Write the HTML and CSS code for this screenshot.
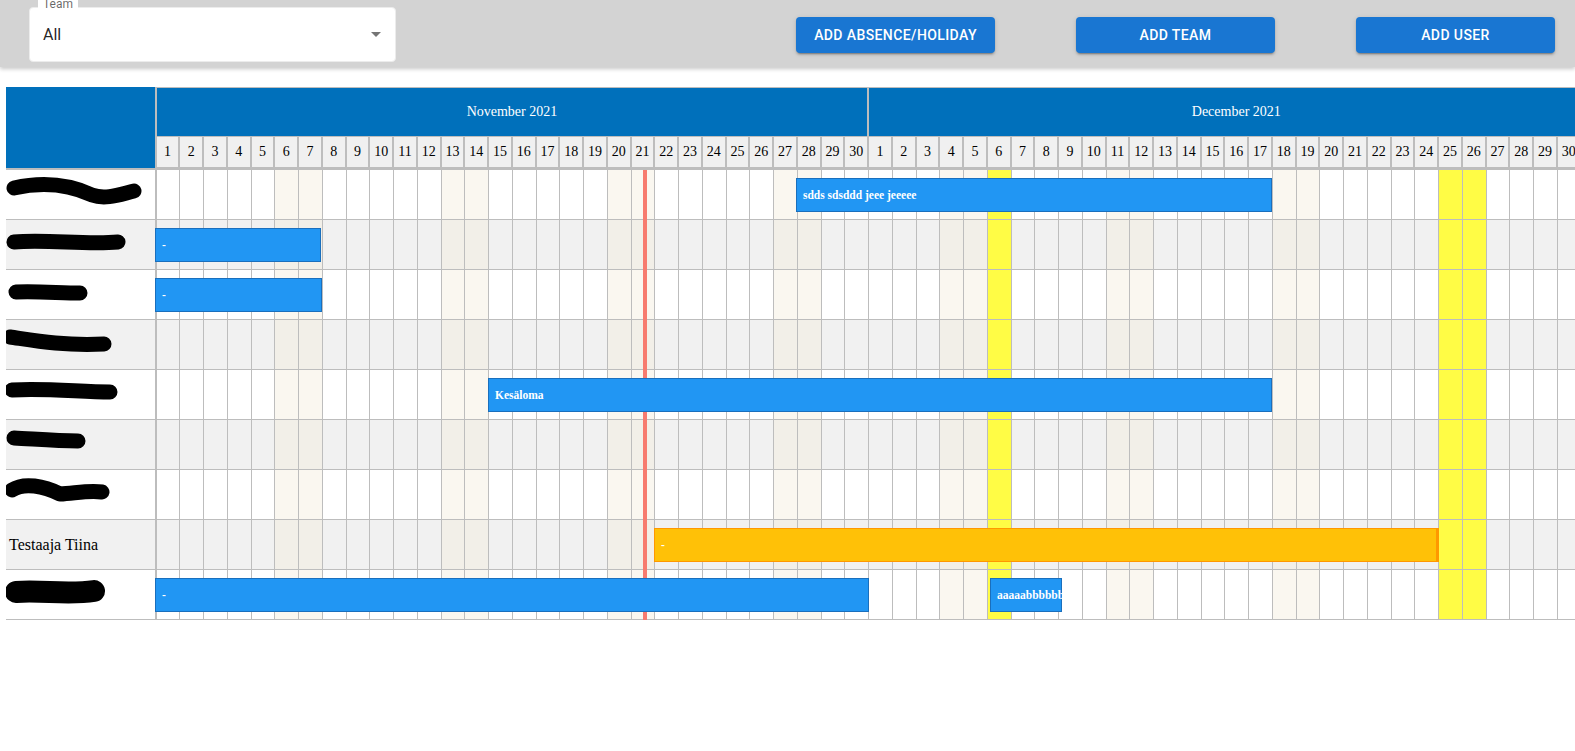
FILE: index.html
```html
<!DOCTYPE html>
<html lang="en">
<head>
<meta charset="utf-8">
<title>Absence calendar</title>
<link rel="stylesheet" href="styles.css">
</head>
<body>
<header class="topbar">
  <div class="select">
    <span class="select-label">Team</span>
    <span class="select-value">All</span>
    <span class="select-arrow"></span>
  </div>
  <div class="actions">
    <button class="btn">Add absence/holiday</button>
    <button class="btn">Add team</button>
    <button class="btn">Add user</button>
  </div>
</header>

<main class="calendar">
  <div class="cal">
    <div class="cal-head">
      <div class="corner"></div>
      <div class="head-right">
        <div class="months">
          <div class="month nov">November 2021</div>
          <div class="month dec">December 2021</div>
        </div>
        <div class="days">
          <div class="dh">1</div><div class="dh">2</div><div class="dh">3</div><div class="dh">4</div><div class="dh">5</div><div class="dh">6</div><div class="dh">7</div><div class="dh">8</div><div class="dh">9</div><div class="dh">10</div><div class="dh">11</div><div class="dh">12</div><div class="dh">13</div><div class="dh">14</div><div class="dh">15</div><div class="dh">16</div><div class="dh">17</div><div class="dh">18</div><div class="dh">19</div><div class="dh">20</div><div class="dh">21</div><div class="dh">22</div><div class="dh">23</div><div class="dh">24</div><div class="dh">25</div><div class="dh">26</div><div class="dh">27</div><div class="dh">28</div><div class="dh">29</div><div class="dh">30</div>
          <div class="dh">1</div><div class="dh">2</div><div class="dh">3</div><div class="dh">4</div><div class="dh">5</div><div class="dh">6</div><div class="dh">7</div><div class="dh">8</div><div class="dh">9</div><div class="dh">10</div><div class="dh">11</div><div class="dh">12</div><div class="dh">13</div><div class="dh">14</div><div class="dh">15</div><div class="dh">16</div><div class="dh">17</div><div class="dh">18</div><div class="dh">19</div><div class="dh">20</div><div class="dh">21</div><div class="dh">22</div><div class="dh">23</div><div class="dh">24</div><div class="dh">25</div><div class="dh">26</div><div class="dh">27</div><div class="dh">28</div><div class="dh">29</div><div class="dh">30</div><div class="dh">31</div>
        </div>
      </div>
    </div>

    <!-- row 1 -->
    <div class="row">
      <div class="name"><svg class="scribble" width="148" height="49" viewBox="0 0 148 49"><path d="M8,18 C35,12 62,14 86,25 C100,30 115,24 128,21"/></svg></div>
      <div class="d"></div><div class="d"></div><div class="d"></div><div class="d"></div><div class="d"></div><div class="d w"></div><div class="d w"></div><div class="d"></div><div class="d"></div><div class="d"></div><div class="d"></div><div class="d"></div><div class="d w"></div><div class="d w"></div><div class="d"></div><div class="d"></div><div class="d"></div><div class="d"></div><div class="d"></div><div class="d w"></div><div class="d w t"></div><div class="d"></div><div class="d"></div><div class="d"></div><div class="d"></div><div class="d"></div><div class="d w"></div><div class="d w"></div><div class="d"></div><div class="d"></div>
      <div class="d"></div><div class="d"></div><div class="d"></div><div class="d w"></div><div class="d w"></div><div class="d h"></div><div class="d"></div><div class="d"></div><div class="d"></div><div class="d"></div><div class="d w"></div><div class="d w"></div><div class="d"></div><div class="d"></div><div class="d"></div><div class="d"></div><div class="d"></div><div class="d w"></div><div class="d w"></div><div class="d"></div><div class="d"></div><div class="d"></div><div class="d"></div><div class="d"></div><div class="d h"></div><div class="d h"></div><div class="d"></div><div class="d"></div><div class="d"></div><div class="d"></div><div class="d"></div>
      <div class="bar" style="left:790px;width:476px">sdds sdsddd jeee jeeeee</div>
    </div>

    <!-- row 2 -->
    <div class="row alt">
      <div class="name"><svg class="scribble" width="148" height="49" viewBox="0 0 148 49"><path d="M8,22 C40,19 80,25 112,22"/></svg></div>
      <div class="d"></div><div class="d"></div><div class="d"></div><div class="d"></div><div class="d"></div><div class="d w"></div><div class="d w"></div><div class="d"></div><div class="d"></div><div class="d"></div><div class="d"></div><div class="d"></div><div class="d w"></div><div class="d w"></div><div class="d"></div><div class="d"></div><div class="d"></div><div class="d"></div><div class="d"></div><div class="d w"></div><div class="d w t"></div><div class="d"></div><div class="d"></div><div class="d"></div><div class="d"></div><div class="d"></div><div class="d w"></div><div class="d w"></div><div class="d"></div><div class="d"></div>
      <div class="d"></div><div class="d"></div><div class="d"></div><div class="d w"></div><div class="d w"></div><div class="d h"></div><div class="d"></div><div class="d"></div><div class="d"></div><div class="d"></div><div class="d w"></div><div class="d w"></div><div class="d"></div><div class="d"></div><div class="d"></div><div class="d"></div><div class="d"></div><div class="d w"></div><div class="d w"></div><div class="d"></div><div class="d"></div><div class="d"></div><div class="d"></div><div class="d"></div><div class="d h"></div><div class="d h"></div><div class="d"></div><div class="d"></div><div class="d"></div><div class="d"></div><div class="d"></div>
      <div class="bar" style="left:149px;width:166px">-</div>
    </div>

    <!-- row 3 -->
    <div class="row">
      <div class="name"><svg class="scribble" width="148" height="49" viewBox="0 0 148 49"><path d="M10,22 C30,21 55,23 74,23"/></svg></div>
      <div class="d"></div><div class="d"></div><div class="d"></div><div class="d"></div><div class="d"></div><div class="d w"></div><div class="d w"></div><div class="d"></div><div class="d"></div><div class="d"></div><div class="d"></div><div class="d"></div><div class="d w"></div><div class="d w"></div><div class="d"></div><div class="d"></div><div class="d"></div><div class="d"></div><div class="d"></div><div class="d w"></div><div class="d w t"></div><div class="d"></div><div class="d"></div><div class="d"></div><div class="d"></div><div class="d"></div><div class="d w"></div><div class="d w"></div><div class="d"></div><div class="d"></div>
      <div class="d"></div><div class="d"></div><div class="d"></div><div class="d w"></div><div class="d w"></div><div class="d h"></div><div class="d"></div><div class="d"></div><div class="d"></div><div class="d"></div><div class="d w"></div><div class="d w"></div><div class="d"></div><div class="d"></div><div class="d"></div><div class="d"></div><div class="d"></div><div class="d w"></div><div class="d w"></div><div class="d"></div><div class="d"></div><div class="d"></div><div class="d"></div><div class="d"></div><div class="d h"></div><div class="d h"></div><div class="d"></div><div class="d"></div><div class="d"></div><div class="d"></div><div class="d"></div>
      <div class="bar" style="left:149px;width:167px">-</div>
    </div>

    <!-- row 4 -->
    <div class="row alt">
      <div class="name"><svg class="scribble" width="148" height="49" viewBox="0 0 148 49"><path d="M4,17 C25,20 55,26 98,24"/></svg></div>
      <div class="d"></div><div class="d"></div><div class="d"></div><div class="d"></div><div class="d"></div><div class="d w"></div><div class="d w"></div><div class="d"></div><div class="d"></div><div class="d"></div><div class="d"></div><div class="d"></div><div class="d w"></div><div class="d w"></div><div class="d"></div><div class="d"></div><div class="d"></div><div class="d"></div><div class="d"></div><div class="d w"></div><div class="d w t"></div><div class="d"></div><div class="d"></div><div class="d"></div><div class="d"></div><div class="d"></div><div class="d w"></div><div class="d w"></div><div class="d"></div><div class="d"></div>
      <div class="d"></div><div class="d"></div><div class="d"></div><div class="d w"></div><div class="d w"></div><div class="d h"></div><div class="d"></div><div class="d"></div><div class="d"></div><div class="d"></div><div class="d w"></div><div class="d w"></div><div class="d"></div><div class="d"></div><div class="d"></div><div class="d"></div><div class="d"></div><div class="d w"></div><div class="d w"></div><div class="d"></div><div class="d"></div><div class="d"></div><div class="d"></div><div class="d"></div><div class="d h"></div><div class="d h"></div><div class="d"></div><div class="d"></div><div class="d"></div><div class="d"></div><div class="d"></div>
    </div>

    <!-- row 5 -->
    <div class="row">
      <div class="name"><svg class="scribble" width="148" height="49" viewBox="0 0 148 49"><path d="M6,20 C40,18 75,22 104,22"/></svg></div>
      <div class="d"></div><div class="d"></div><div class="d"></div><div class="d"></div><div class="d"></div><div class="d w"></div><div class="d w"></div><div class="d"></div><div class="d"></div><div class="d"></div><div class="d"></div><div class="d"></div><div class="d w"></div><div class="d w"></div><div class="d"></div><div class="d"></div><div class="d"></div><div class="d"></div><div class="d"></div><div class="d w"></div><div class="d w t"></div><div class="d"></div><div class="d"></div><div class="d"></div><div class="d"></div><div class="d"></div><div class="d w"></div><div class="d w"></div><div class="d"></div><div class="d"></div>
      <div class="d"></div><div class="d"></div><div class="d"></div><div class="d w"></div><div class="d w"></div><div class="d h"></div><div class="d"></div><div class="d"></div><div class="d"></div><div class="d"></div><div class="d w"></div><div class="d w"></div><div class="d"></div><div class="d"></div><div class="d"></div><div class="d"></div><div class="d"></div><div class="d w"></div><div class="d w"></div><div class="d"></div><div class="d"></div><div class="d"></div><div class="d"></div><div class="d"></div><div class="d h"></div><div class="d h"></div><div class="d"></div><div class="d"></div><div class="d"></div><div class="d"></div><div class="d"></div>
      <div class="bar" style="left:482px;width:784px">Kesäloma</div>
    </div>

    <!-- row 6 -->
    <div class="row alt">
      <div class="name"><svg class="scribble" width="148" height="49" viewBox="0 0 148 49"><path d="M8,18 C28,19 50,21 72,21"/></svg></div>
      <div class="d"></div><div class="d"></div><div class="d"></div><div class="d"></div><div class="d"></div><div class="d w"></div><div class="d w"></div><div class="d"></div><div class="d"></div><div class="d"></div><div class="d"></div><div class="d"></div><div class="d w"></div><div class="d w"></div><div class="d"></div><div class="d"></div><div class="d"></div><div class="d"></div><div class="d"></div><div class="d w"></div><div class="d w t"></div><div class="d"></div><div class="d"></div><div class="d"></div><div class="d"></div><div class="d"></div><div class="d w"></div><div class="d w"></div><div class="d"></div><div class="d"></div>
      <div class="d"></div><div class="d"></div><div class="d"></div><div class="d w"></div><div class="d w"></div><div class="d h"></div><div class="d"></div><div class="d"></div><div class="d"></div><div class="d"></div><div class="d w"></div><div class="d w"></div><div class="d"></div><div class="d"></div><div class="d"></div><div class="d"></div><div class="d"></div><div class="d w"></div><div class="d w"></div><div class="d"></div><div class="d"></div><div class="d"></div><div class="d"></div><div class="d"></div><div class="d h"></div><div class="d h"></div><div class="d"></div><div class="d"></div><div class="d"></div><div class="d"></div><div class="d"></div>
    </div>

    <!-- row 7 -->
    <div class="row">
      <div class="name"><svg class="scribble" width="148" height="49" viewBox="0 0 148 49"><path d="M6,20 C18,12 38,16 54,24 C70,23 84,20 96,22"/></svg></div>
      <div class="d"></div><div class="d"></div><div class="d"></div><div class="d"></div><div class="d"></div><div class="d w"></div><div class="d w"></div><div class="d"></div><div class="d"></div><div class="d"></div><div class="d"></div><div class="d"></div><div class="d w"></div><div class="d w"></div><div class="d"></div><div class="d"></div><div class="d"></div><div class="d"></div><div class="d"></div><div class="d w"></div><div class="d w t"></div><div class="d"></div><div class="d"></div><div class="d"></div><div class="d"></div><div class="d"></div><div class="d w"></div><div class="d w"></div><div class="d"></div><div class="d"></div>
      <div class="d"></div><div class="d"></div><div class="d"></div><div class="d w"></div><div class="d w"></div><div class="d h"></div><div class="d"></div><div class="d"></div><div class="d"></div><div class="d"></div><div class="d w"></div><div class="d w"></div><div class="d"></div><div class="d"></div><div class="d"></div><div class="d"></div><div class="d"></div><div class="d w"></div><div class="d w"></div><div class="d"></div><div class="d"></div><div class="d"></div><div class="d"></div><div class="d"></div><div class="d h"></div><div class="d h"></div><div class="d"></div><div class="d"></div><div class="d"></div><div class="d"></div><div class="d"></div>
    </div>

    <!-- row 8 -->
    <div class="row alt">
      <div class="name">Testaaja Tiina</div>
      <div class="d"></div><div class="d"></div><div class="d"></div><div class="d"></div><div class="d"></div><div class="d w"></div><div class="d w"></div><div class="d"></div><div class="d"></div><div class="d"></div><div class="d"></div><div class="d"></div><div class="d w"></div><div class="d w"></div><div class="d"></div><div class="d"></div><div class="d"></div><div class="d"></div><div class="d"></div><div class="d w"></div><div class="d w t"></div><div class="d"></div><div class="d"></div><div class="d"></div><div class="d"></div><div class="d"></div><div class="d w"></div><div class="d w"></div><div class="d"></div><div class="d"></div>
      <div class="d"></div><div class="d"></div><div class="d"></div><div class="d w"></div><div class="d w"></div><div class="d h"></div><div class="d"></div><div class="d"></div><div class="d"></div><div class="d"></div><div class="d w"></div><div class="d w"></div><div class="d"></div><div class="d"></div><div class="d"></div><div class="d"></div><div class="d"></div><div class="d w"></div><div class="d w"></div><div class="d"></div><div class="d"></div><div class="d"></div><div class="d"></div><div class="d"></div><div class="d h"></div><div class="d h"></div><div class="d"></div><div class="d"></div><div class="d"></div><div class="d"></div><div class="d"></div>
      <div class="bar pending" style="left:648px;width:785px">-</div>
    </div>

    <!-- row 9 -->
    <div class="row">
      <div class="name"><svg class="scribble thick" width="148" height="49" viewBox="0 0 148 49"><path d="M10,22 C35,20 62,25 88,21"/></svg></div>
      <div class="d"></div><div class="d"></div><div class="d"></div><div class="d"></div><div class="d"></div><div class="d w"></div><div class="d w"></div><div class="d"></div><div class="d"></div><div class="d"></div><div class="d"></div><div class="d"></div><div class="d w"></div><div class="d w"></div><div class="d"></div><div class="d"></div><div class="d"></div><div class="d"></div><div class="d"></div><div class="d w"></div><div class="d w t"></div><div class="d"></div><div class="d"></div><div class="d"></div><div class="d"></div><div class="d"></div><div class="d w"></div><div class="d w"></div><div class="d"></div><div class="d"></div>
      <div class="d"></div><div class="d"></div><div class="d"></div><div class="d w"></div><div class="d w"></div><div class="d h"></div><div class="d"></div><div class="d"></div><div class="d"></div><div class="d"></div><div class="d w"></div><div class="d w"></div><div class="d"></div><div class="d"></div><div class="d"></div><div class="d"></div><div class="d"></div><div class="d w"></div><div class="d w"></div><div class="d"></div><div class="d"></div><div class="d"></div><div class="d"></div><div class="d"></div><div class="d h"></div><div class="d h"></div><div class="d"></div><div class="d"></div><div class="d"></div><div class="d"></div><div class="d"></div>
      <div class="bar" style="left:149px;width:714px">-</div>
      <div class="bar" style="left:984px;width:72px">aaaaabbbbbb</div>
    </div>
  </div>
</main>
</body>
</html>
```

FILE: styles.css
```css
* { box-sizing: border-box; }

html, body {
  margin: 0;
  background: #fff;
  overflow: hidden;
}

body {
  font-family: "Liberation Serif", "Times New Roman", serif;
  color: #000;
}

/* ---------- top bar ---------- */
.topbar {
  display: flex;
  align-items: flex-start;
  height: 67px;
  padding: 0 20px 0 29px;
  background: #d3d3d3;
  box-shadow: 0 2px 4px rgba(0, 0, 0, 0.22);
  position: relative;
  z-index: 5;
}

.select {
  position: relative;
  display: flex;
  align-items: center;
  width: 367px;
  height: 55px;
  margin-top: 7px;
  padding: 0 14px 0 13px;
  background: #fff;
  border: 1px solid #ececec;
  border-radius: 4px;
}

.select-label {
  position: absolute;
  left: 8px;
  top: -11px;
  padding: 0 5px;
  background: #fff;
  font: 400 12px/14px Roboto, "Liberation Sans", sans-serif;
  color: rgba(0, 0, 0, 0.6);
}

.select-value {
  font: 400 16px/1 Roboto, "Liberation Sans", sans-serif;
  color: rgba(0, 0, 0, 0.87);
}

.select-arrow {
  margin-left: auto;
  width: 0;
  height: 0;
  border-left: 5px solid transparent;
  border-right: 5px solid transparent;
  border-top: 5px solid rgba(0, 0, 0, 0.54);
}

.actions {
  display: flex;
  gap: 81px;
  margin-left: auto;
  margin-top: 17px;
}

.btn {
  width: 199px;
  height: 36px;
  padding: 0;
  border: 0;
  border-radius: 4px;
  background: #1976d2;
  color: #fff;
  font: 500 14px/1 Roboto, "Liberation Sans", sans-serif;
  letter-spacing: 0.4px;
  text-transform: uppercase;
  box-shadow: 0 3px 1px -2px rgba(0, 0, 0, 0.2), 0 2px 2px 0 rgba(0, 0, 0, 0.14), 0 1px 5px 0 rgba(0, 0, 0, 0.12);
}

/* ---------- calendar ---------- */
.calendar {
  margin: 20px 0 0 6px;
  overflow: hidden;
}

.cal {
  width: max-content;
}

.cal-head {
  display: flex;
}

.corner {
  width: 150.7px;
  height: 83px;
  background: #0070bb;
  border-right: 2px solid #bdbdbd;
  border-bottom: 2px solid #bdbdbd;
}

.months {
  display: flex;
}

.month {
  height: 49px;
  display: flex;
  align-items: center;
  justify-content: center;
  background: #0070bb;
  color: #fff;
  font-size: 14px;
  border-top: 1px solid #bdbdbd;
  border-right: 2px solid #bdbdbd;
}

.nov { width: 712.5px; }
.dec { width: 736.25px; }

.days {
  display: flex;
}

.dh {
  flex: 0 0 23.75px;
  width: 23.75px;
  height: 34px;
  display: flex;
  align-items: center;
  justify-content: center;
  background: #f0f0f0;
  font-size: 14px;
  border-top: 1px solid #bdbdbd;
  border-right: 2px solid #bdbdbd;
  border-bottom: 3px solid #bdbdbd;
}

.row {
  position: relative;
  display: flex;
  height: 50px;
  background: #fff;
}

.row.alt {
  background: #f1f1f1;
}

.name {
  flex: 0 0 150.7px;
  display: flex;
  align-items: center;
  padding-left: 3px;
  font-size: 16px;
  border-right: 2px solid #bdbdbd;
  border-bottom: 1px solid #bdbdbd;
  overflow: hidden;
}

.scribble {
  display: block;
  margin-left: -3px;
  fill: none;
  stroke: #000;
  stroke-width: 15;
  stroke-linecap: round;
  stroke-linejoin: round;
}

.scribble.thick {
  stroke-width: 22;
}

.d {
  flex: 0 0 23.75px;
  width: 23.75px;
  border-right: 1px solid #bdbdbd;
  border-bottom: 1px solid #bdbdbd;
}

.d.w { background: #faf7f0; }
.alt .d.w { background: #f2efe8; }
.d.h, .alt .d.h { background: #fffc45; }

.d.t {
  position: relative;
}

.d.t::after {
  content: "";
  position: absolute;
  left: 11px;
  top: 0;
  bottom: -1px;
  width: 4.5px;
  background: #f77b6f;
  z-index: 1;
}

.bar {
  position: absolute;
  top: 8px;
  height: 34px;
  padding-left: 6px;
  background: #2196f3;
  border: 1px solid #1a6fbd;
  color: #fff;
  font: 700 11.5px/32px "Liberation Serif", "Times New Roman", serif;
  white-space: nowrap;
  z-index: 2;
}

.bar.pending {
  background: #ffc107;
  border-color: #ff9800;
  border-right-width: 3px;
}
```
